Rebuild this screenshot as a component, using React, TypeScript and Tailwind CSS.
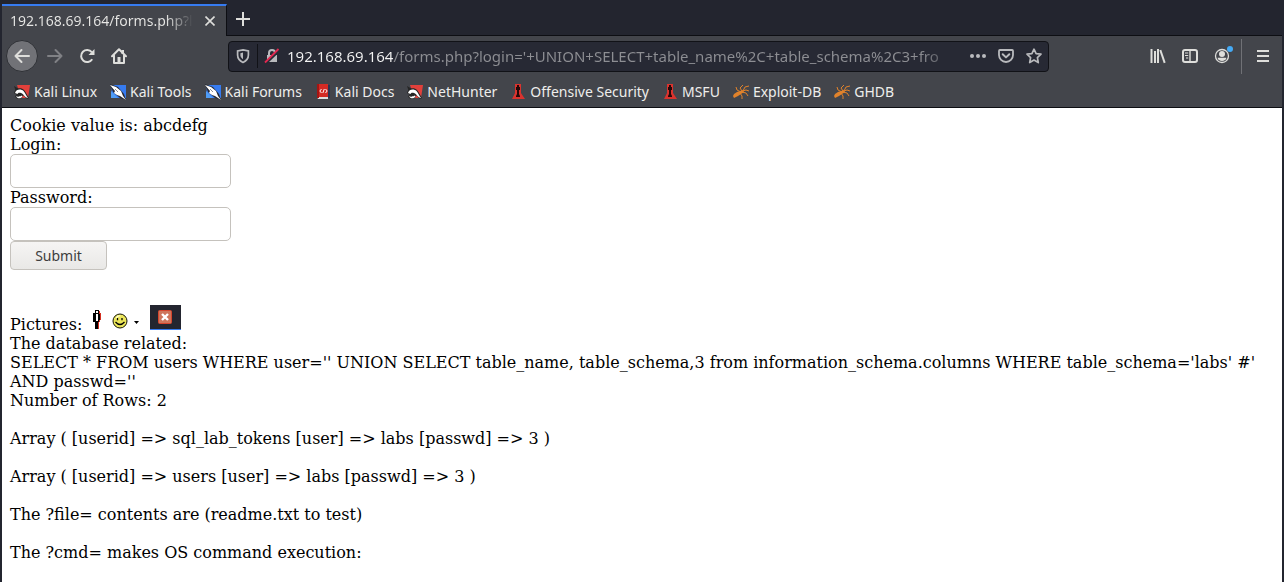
import type { ReactNode } from "react";

function KaliDragon() {
  return (
    <svg viewBox="0 0 16 16" className="size-4">
      <path d="M3 1H16L14 14H7Z" fill="#e2403b" />
      <path d="M0 2L5 5L2 8Z" fill="#262626" />
      <path d="M0 9C1 4 7 3 10 6C12 8 13 11 15 14L13 15L9 11L8 14C5 16 2 15 1 12L3 11Z" fill="#262626" />
      <path d="M1 9C2 5 7 4.5 9.5 7C11.5 9 12 12 14 14C11 14 10 10 7 9C5 8.4 4 9 3.5 10Z" fill="#fff" />
      <path d="M2 12C3 13 6 13 7.5 11.5L8.5 12.5C7 15 3 15 2 12Z" fill="#fff" />
    </svg>
  );
}

function KaliTool() {
  return (
    <svg viewBox="0 0 16 16" className="size-4">
      <path d="M2 1H16V14H1Z" fill="#367bf0" />
      <path d="M1 7L8 14H1Z" fill="#4f9cf5" />
      <path d="M0 0L8 3L14 10L16 16L10 14L3 8Z" fill="#272a33" />
      <path d="M0 1L6 3L11 7L13 12L16 16L10 12L7 11L4 9L5 7Z" fill="#fff" />
      <path d="M5 5L8 8" stroke="#8a8d94" />
    </svg>
  );
}

function DocsBook() {
  return (
    <svg viewBox="0 0 16 16" className="size-4">
      <path d="M13 1H15V14H13Z" fill="#2b3350" />
      <path d="M2 0H13V13H2Z" fill="#d32a24" />
      <path d="M2 13H13V15H3Z" fill="#ddd" />
      <path d="M2 0H4V14H2Z" fill="#a51512" />
      <path d="M6.5 5L4.8 7L6.5 9M10.5 5L12.2 7L10.5 9M9.3 5L7.8 9" stroke="#fff" fill="none" />
    </svg>
  );
}

function OffSec() {
  return (
    <svg viewBox="0 0 16 16" className="size-4">
      <path d="M5 0H11V9L15 15H2L5 9Z" fill="#d9332e" />
      <path d="M7 1H9V3H10V6H9V10L10 12V13H6V12L7 10V6H6V3H7Z" fill="#240808" />
    </svg>
  );
}

function Bug() {
  return (
    <svg viewBox="0 0 16 16" className="size-4">
      <path d="M1 10L4 8L7 7L10 6L11 8L8 10L5 12L1 14L0 12Z" fill="#e0822b" />
      <path d="M8 8L4 6L3 3M9 7L7 4L10 1M10 7L12 3L16 2M10 7L13 6L16 7M9 8L13 9L15 12M7 9L9 12L9 15" stroke="#e0822b" fill="none" />
    </svg>
  );
}

const bookmarks: { label: string; icon: ReactNode }[] = [
  { label: "Kali Linux", icon: <KaliDragon /> },
  { label: "Kali Tools", icon: <KaliTool /> },
  { label: "Kali Forums", icon: <KaliTool /> },
  { label: "Kali Docs", icon: <DocsBook /> },
  { label: "NetHunter", icon: <KaliDragon /> },
  { label: "Offensive Security", icon: <OffSec /> },
  { label: "MSFU", icon: <OffSec /> },
  { label: "Exploit-DB", icon: <Bug /> },
  { label: "GHDB", icon: <Bug /> },
];

function ToolButton({ label, className = "", children }: { label: string; className?: string; children: ReactNode }) {
  return (
    <button type="button" aria-label={label} className={`flex size-8 shrink-0 items-center justify-center ${className}`}>
      <svg viewBox="0 0 16 16" className="size-4 overflow-visible" fill="none" stroke="currentColor" strokeWidth="2">
        {children}
      </svg>
    </button>
  );
}

function TabStrip() {
  return (
    <div className="flex h-9 items-end border-b border-[#0d0e13] bg-[#23252f] pt-1">
      <div className="-mb-px flex h-8 w-[225px] items-center justify-between border-t-2 border-r border-t-[#367bf0] border-r-[#0d0e13] bg-[#43454b] pr-[6px] pl-2">
        <button
          type="button"
          className="bg-linear-to-r from-[#e8e8e6] from-85% to-transparent bg-clip-text text-left text-sm whitespace-nowrap text-transparent"
        >
          192.168.69.164/forms.php?l
        </button>
        <button type="button" aria-label="Close tab" className="flex size-5 shrink-0 items-center justify-center">
          <svg viewBox="0 0 10 10" className="size-[10px]" stroke="currentColor" strokeWidth="1.6">
            <path d="M0.5 0.5L9.5 9.5M9.5 0.5L0.5 9.5" />
          </svg>
        </button>
      </div>
      <ToolButton label="New tab">
        <path d="M8 1V15M1 8H15" />
      </ToolButton>
    </div>
  );
}

function AddressBar() {
  return (
    <div className="flex h-[31px] min-w-0 flex-1 items-center rounded border border-[#111217] bg-[#272934] pl-1.5 text-[#b9babd]">
      <svg viewBox="0 0 16 16" className="size-4 shrink-0" fill="none" stroke="currentColor">
        <path d="M8 1.8L13.4 3V7C13.4 10.8 11 13 8 14.4C5 13 2.6 10.8 2.6 7V3Z" strokeWidth="1.7" />
        <path d="M8 4.6V11.2C6.2 10 5.4 8.6 5.4 7V5.2Z" fill="currentColor" stroke="none" />
      </svg>
      <span className="ml-1.5 h-6 w-px shrink-0 bg-[#111217]" />
      <svg viewBox="0 0 16 16" className="ml-1.5 size-4 shrink-0" fill="none" stroke="currentColor">
        <path d="M5 8V5C5 1 11 1 11 5V8" strokeWidth="2" />
        <path d="M3 7H13V14H3Z" fill="currentColor" stroke="none" />
        <path d="M2 15.5L16 2" stroke="#272934" strokeWidth="2" />
        <path d="M1 14.5L14.5 1" stroke="#e22850" strokeWidth="1.8" />
      </svg>
      <input
        type="text"
        aria-label="Address"
        defaultValue="192.168.69.164/forms.php?login='+UNION+SELECT+table_name%2C+table_schema%2C3+fro"
        className="ml-[7px] h-7 min-w-0 flex-1 bg-[linear-gradient(90deg,#f4f4f4_107px,#8d8e93_107px,#8d8e93_calc(100%-44px),transparent)] bg-clip-text text-transparent outline-none"
      />
      <ToolButton label="Page actions" className="w-7">
        <g fill="currentColor" stroke="none">
          <circle cx="2" cy="8" r="2" />
          <circle cx="8" cy="8" r="2" />
          <circle cx="14" cy="8" r="2" />
        </g>
      </ToolButton>
      <ToolButton label="Save to Pocket" className="w-7">
        <path d="M1.9 2H14.1Q15 2 15 3V7A7 7 0 0 1 1 7V3Q1 2 1.9 2Z" strokeWidth="1.8" />
        <path d="M4.7 6.2L8 9.4L11.3 6.2" strokeLinecap="round" strokeLinejoin="round" />
      </ToolButton>
      <ToolButton label="Bookmark this page" className="w-7">
        <path d="M8 1.2L10.1 5.6L15 6.2L11.4 9.6L12.3 14.6L8 12.1L3.7 14.6L4.6 9.6L1 6.2L5.9 5.6Z" strokeWidth="1.7" strokeLinejoin="round" />
      </ToolButton>
    </div>
  );
}

function NavBar() {
  return (
    <div className="flex h-10 items-center pr-[3px] pl-1">
      <ToolButton label="Back" className="mr-px rounded-full border border-[#2f3136] bg-[#717277]">
        <path d="M15 8H1.5M7.5 2L1.5 8L7.5 14" strokeLinecap="round" strokeLinejoin="round" />
      </ToolButton>
      <ToolButton label="Forward" className="text-[#808185]">
        <path d="M1 8H14.5M8.5 2L14.5 8L8.5 14" strokeLinecap="round" strokeLinejoin="round" />
      </ToolButton>
      <ToolButton label="Reload">
        <path d="M13.2 11.2A6 6 0 1 1 12.8 4.2" />
        <path d="M15.5 1V7H9.5Z" fill="currentColor" stroke="none" />
      </ToolButton>
      <ToolButton label="Home">
        <path d="M1 8.2L8 1.2L15 8.2M3 7.5V15H13V7.5" strokeLinecap="round" strokeLinejoin="round" />
        <path d="M6.5 9H9.5V14H6.5ZM10.5 2H13V6H10.5Z" fill="currentColor" stroke="none" />
      </ToolButton>
      <div className="flex min-w-0 flex-1 px-[93px]">
        <AddressBar />
      </div>
      <ToolButton label="Library">
        <path d="M1.5 1V15M5 3V15M8 1V15" />
        <path d="M10.3 2L14.7 14.8" />
      </ToolButton>
      <ToolButton label="Sidebars">
        <rect x="1" y="2" width="14" height="12" rx="2" />
        <path d="M8 2V14" strokeWidth="1.4" />
        <path d="M3 5H6.2M3 7.5H6.2M4 10H6.2" strokeWidth="1.1" />
      </ToolButton>
      <ToolButton label="Account">
        <circle cx="8" cy="8" r="6.5" strokeWidth="1.3" />
        <circle cx="8" cy="6" r="3" fill="currentColor" stroke="none" />
        <path d="M3.6 9.8H12.4C12.4 14 3.6 14 3.6 9.8Z" fill="currentColor" stroke="none" />
        <circle cx="16" cy="1" r="3" fill="#45aaf5" stroke="none" />
      </ToolButton>
      <span className="mx-[3px] h-[35px] w-px shrink-0 bg-[#707176]" />
      <ToolButton label="Open menu" className="ml-0.5">
        <path d="M2 3H14M2 8H14M2 13H14" />
      </ToolButton>
    </div>
  );
}

function PictureRow() {
  return (
    <div className="mt-[35px] flex h-[29px] items-start">
      <span className="mt-[10px]">Pictures:</span>
      <svg viewBox="0 0 10 20" className="mt-[5px] ml-[10px] h-5 w-[10px]" shapeRendering="crispEdges">
        <path d="M3 0H7V3H8V12H7V19H3V12H1V3H3Z" fill="#000" />
        <path d="M4 1H6V3H4ZM4 4H6V11H4Z" fill="#fff" />
        <path d="M7 1H8V3H9V10H8V12H7V19H6V12H7V10H8V4H7Z" fill="#d32f20" />
      </svg>
      <svg viewBox="0 0 28 16" className="mt-2 ml-[10px] h-4 w-7">
        <circle cx="8" cy="8" r="7" fill="#ece65a" stroke="#151505" />
        <path d="M4 4Q7 1 9 3Q6 3 4 6Z" fill="#ffffd0" />
        <path d="M5.5 5V7.2M10 5V7.2M3.5 9Q8 14 12.5 9" fill="none" stroke="#000" strokeWidth="1.3" />
        <path d="M22 8H27L24.5 11Z" fill="#000" />
      </svg>
      <svg viewBox="0 0 31 25" className="ml-[10px] h-[25px] w-[31px]">
        <path d="M0 0H31V25H0Z" fill="#23252f" />
        <path d="M0 24H31V25H0Z" fill="#367bf0" />
        <rect x="8.5" y="5.5" width="13" height="13" rx="1" fill="#cf755b" stroke="#d5452d" />
        <path d="M12 9L18 15M18 9L12 15" stroke="#fff" strokeWidth="2.4" />
      </svg>
    </div>
  );
}

const fieldClass = "block h-[34px] w-[221px] rounded-[5px] border border-[#c5c2bd] bg-white px-2";

export default function App() {
  return (
    <div className="min-h-screen border-x-2 border-[#23252f] bg-white">
      <header className="border-b border-[#0d0e13] bg-[#43454b] font-['Noto_Sans',sans-serif] text-[15px] text-[#dededb]">
        <TabStrip />
        <NavBar />
        <nav className="flex h-[31px] items-center gap-[13px] pl-3">
          {bookmarks.map((bookmark) => (
            <a key={bookmark.label} href="#" className="flex items-center gap-1 text-sm whitespace-nowrap text-[#eeeeec]">
              {bookmark.icon}
              {bookmark.label}
            </a>
          ))}
        </nav>
      </header>
      <main className="p-2 font-['DejaVu_Serif',serif] text-base leading-[19px] text-black">
        <p>Cookie value is: abcdefg</p>
        <form onSubmit={(event) => event.preventDefault()}>
          <label htmlFor="login" className="block">Login:</label>
          <input id="login" type="text" className={fieldClass} />
          <label htmlFor="password" className="block">Password:</label>
          <input id="password" type="password" className={fieldClass} />
          <button
            type="submit"
            className="block h-[29px] w-[97px] rounded border border-[#c5c2bd] bg-linear-to-b from-[#f6f5f4] to-[#e9e8e6] font-['Noto_Sans',sans-serif] text-sm text-[#3d3d3d]"
          >
            Submit
          </button>
        </form>
        <PictureRow />
        <p>The database related:</p>
        <p>
          SELECT * FROM users WHERE user='' UNION SELECT table_name, table_schema,3 from information_schema.columns WHERE
          table_schema='labs' #' AND passwd=''
        </p>
        <p>Number of Rows: 2</p>
        <p className="mt-[19px]">Array ( [userid] =&gt; sql_lab_tokens [user] =&gt; labs [passwd] =&gt; 3 )</p>
        <p className="mt-[19px]">Array ( [userid] =&gt; users [user] =&gt; labs [passwd] =&gt; 3 )</p>
        <p className="mt-[19px]">The ?file= contents are (readme.txt to test)</p>
        <p className="mt-[19px]">The ?cmd= makes OS command execution:</p>
      </main>
    </div>
  );
}
